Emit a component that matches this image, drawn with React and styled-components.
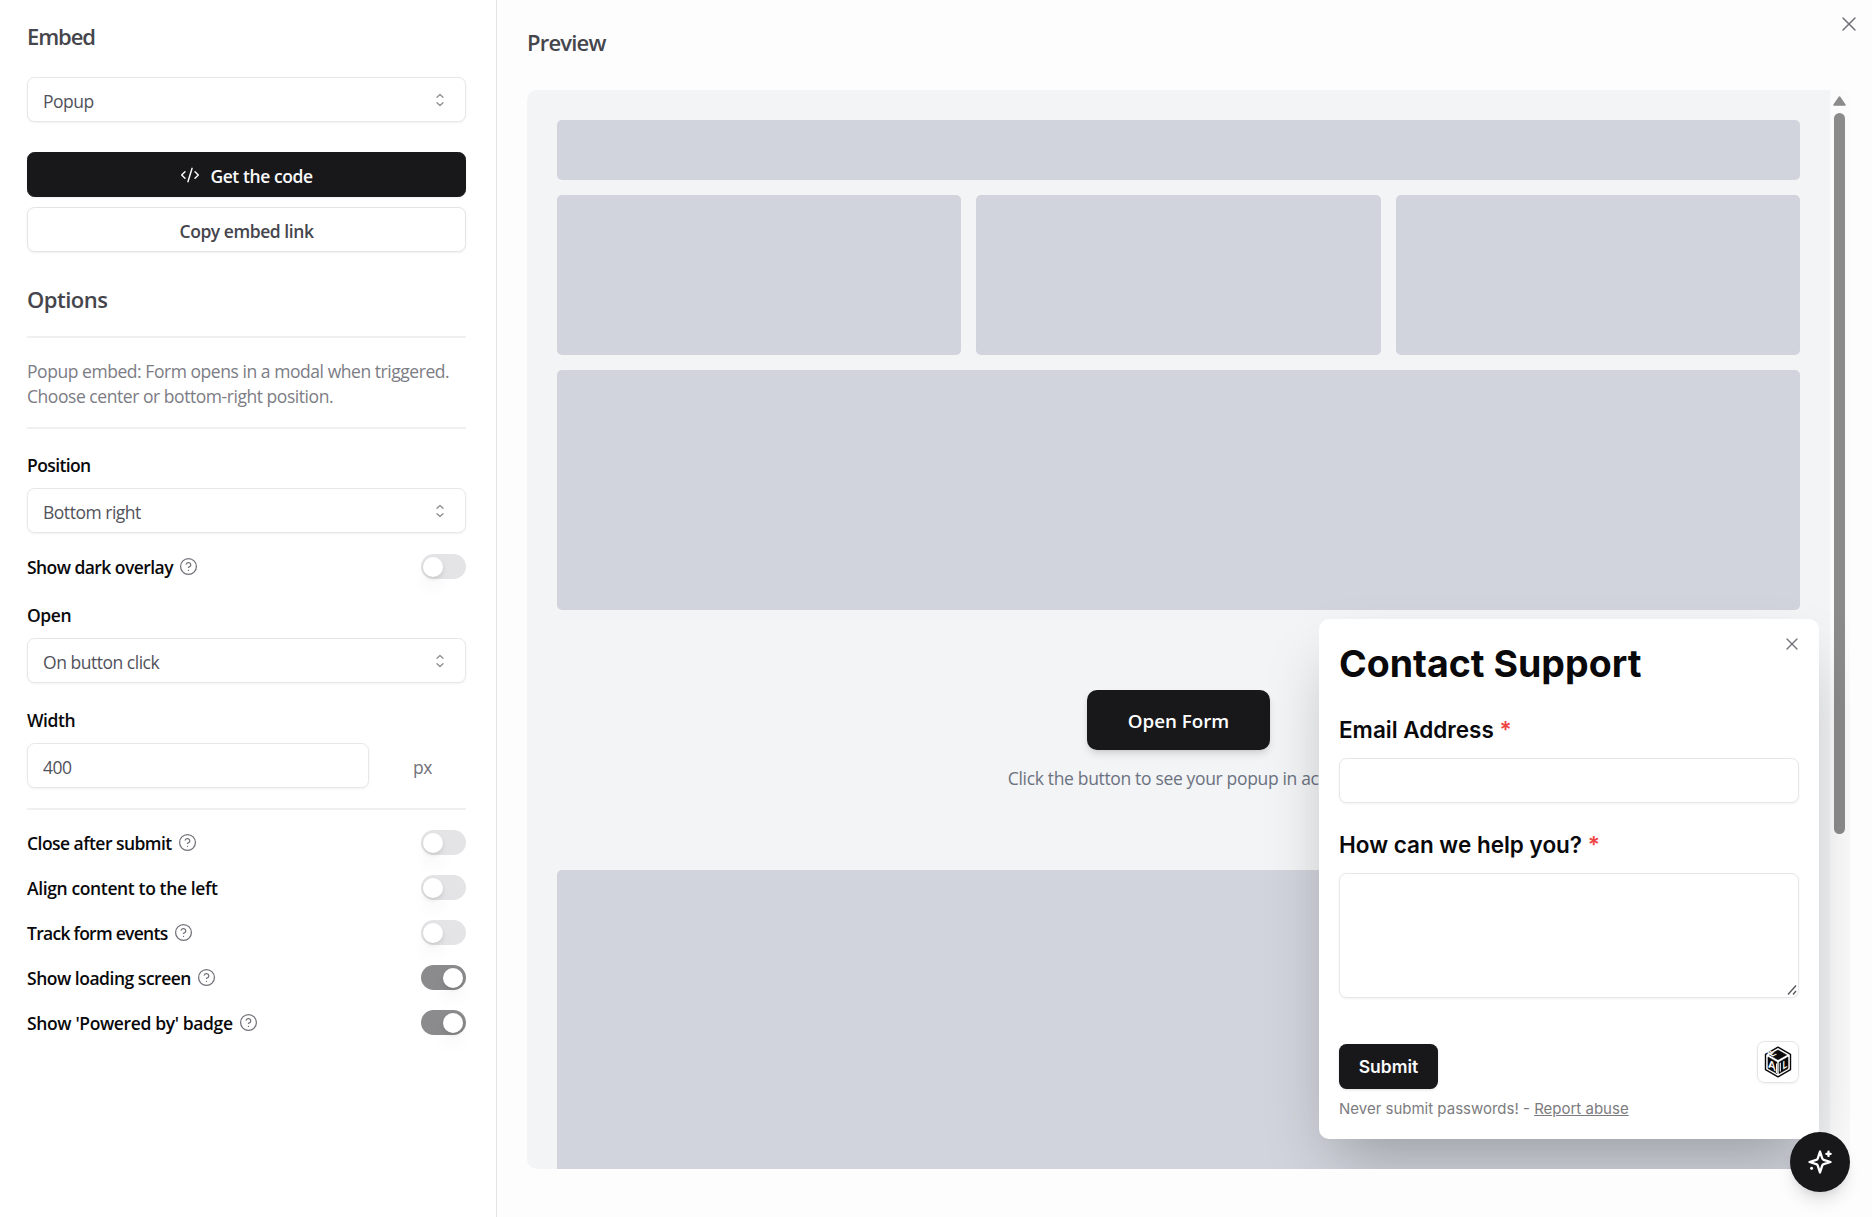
import React from 'react';
import styled, { createGlobalStyle, css } from "styled-components";
import { CodeXml, CircleHelp, X } from "lucide-react";

const GlobalStyle = createGlobalStyle`
    *
    {
        box-sizing: border-box;
    }

    body
    {
        margin: 0;
        background: #fdfdfe;
        color: #09090b;
        font-family: "Open Sans", "Noto Sans", sans-serif;
        font-size: 17.5px;
        overflow: hidden;
    }

    h2, h3, p
    {
        margin: 0;
    }
`;

const field = css`
    height: 45px;
    background: #fff;
    border: 1px solid #e7e7e9;
    border-radius: 7.5px;
    box-shadow: 0 1px 2.5px rgba(0, 0, 0, .06);
`;

const Page = styled.div`
    display: flex;
    height: 1217px;
`;

const Sidebar = styled.aside`
    width: 497px;
    flex: none;
    padding: 21px 30px 0 27px;
    background: #fff;
    border-right: 1px solid #e4e4e7;
`;

const Heading = styled.h2`
    font-size: 22px;
    line-height: 30px;
    font-weight: 600;
    letter-spacing: ${p => p.$track || "-0.8px"};
    color: #45454c;
`;

const Stack = styled.div`
    display: flex;
    flex-direction: column;
    gap: ${p => p.$gap || 0}px;
    padding: ${p => p.$pad || 0};
`;

const SelectBox = styled.div`
    ${field}
    display: flex;
    align-items: center;
    justify-content: space-between;
    padding: 2px 15px 0 15px;
    color: #52525b;
    letter-spacing: -0.48px;

    svg
    {
        margin: -1px 0 0;
    }
`;

const Button = styled.button`
    ${field}
    display: flex;
    align-items: center;
    justify-content: center;
    gap: 10px;
    width: 100%;
    padding: 2px 0 0;
    font: inherit;
    font-weight: 600;
    letter-spacing: ${p => p.$dark ? "-0.42px" : "-0.45px"};
    color: ${p => p.$dark ? "#fafafa" : "#45454c"};
    background: ${p => p.$dark ? "#18181b" : "#fff"};
    border-color: ${p => p.$dark ? "#18181b" : "#e4e4e7"};

    svg
    {
        margin-top: -1px;
    }
`;

const Rule = styled.div`
    height: 2px;
    background: #f0f0f1;
`;

const Description = styled.p`
    height: 89px;
    padding-top: 21px;
    line-height: 25px;
    letter-spacing: -0.45px;
    color: #7c7c85;
    white-space: nowrap;
`;

const Label = styled.span`
    display: flex;
    align-items: center;
    gap: 6px;
    line-height: 24px;
    font-weight: 600;
    letter-spacing: ${p => p.$track || "-0.45px"};
    white-space: nowrap;

    svg
    {
        color: #71717a;
        margin-top: -2px;
    }
`;

const OptionRow = styled.div`
    display: flex;
    align-items: center;
    justify-content: space-between;
    height: 25px;

    ${Label}
    {
        padding-top: 1px;
    }
`;

const Switch = styled.div`
    width: 45px;
    height: 25px;
    padding: 2.5px 3px 2.5px 2px;
    display: flex;
    justify-content: ${p => p.$on ? "flex-end" : "flex-start"};
    border-radius: 13px;
    background: ${p => p.$on ? "#8b8b8d" : "#e4e4e7"};

    &::after
    {
        content: "";
        width: 20px;
        height: 20px;
        border-radius: 50%;
        background: #fff;
        box-shadow: 0 12px 18px -4px rgba(0, 0, 0, .1), 0 2px 4px rgba(0, 0, 0, .1);
    }
`;

const WidthRow = styled.div`
    display: grid;
    grid-template-columns: 342px 1fr;
    align-items: center;
    color: #71717a;

    > span
    {
        padding: 2px 0 0 44px;
        letter-spacing: -0.4px;
    }
`;

const Main = styled.main`
    flex: 1;
    position: relative;
    padding: 27px 22px 48px 30px;
`;

const CloseButton = styled.span`
    position: absolute;
    display: flex;
    top: ${p => p.$top}px;
    right: ${p => p.$right}px;
    color: #71717a;
`;

const Preview = styled.div`
    position: relative;
    display: flex;
    height: 1079px;
    margin-top: 33px;
    border-radius: 10px;
    overflow: hidden;
    background: #f3f4f6;
`;

const Canvas = styled.div`
    flex: 1;
    display: flex;
    flex-direction: column;
    gap: 15px;
    padding: 30px 30px 0;
`;

const Block = styled.div`
    flex: none;
    height: ${p => p.$h}px;
    border-radius: 5px;
    background: #d1d4dc;
`;

const Columns = styled.div`
    flex: none;
    display: grid;
    grid-template-columns: repeat(3, 1fr);
    gap: 15px;
`;

const Trigger = styled.div`
    flex: none;
    height: 230px;
    display: flex;
    flex-direction: column;
    align-items: center;
    padding-top: 65px;
    color: #6b7280;

    p
    {
        margin-top: 15px;
        line-height: 26px;
        letter-spacing: -0.34px;
    }
`;

const OpenButton = styled.button`
    width: 183px;
    height: 60px;
    border: 0;
    border-radius: 10px;
    background: #18181b;
    color: #fff;
    font: inherit;
    font-size: 18.75px;
    font-weight: 600;
    padding-top: 1px;
    box-shadow: 0 5px 8px -1px rgba(0, 0, 0, .12), 0 2px 5px -2px rgba(0, 0, 0, .1);
`;

const ScrollTrack = styled.div`
    width: 20px;
    display: flex;
    flex-direction: column;
    align-items: center;
    padding: 6px 2px 0 0;
    background: #fbfbfc;
`;

const ScrollThumb = styled.div`
    width: 11px;
    height: 721px;
    margin-top: 7px;
    border-radius: 6px;
    background: #8b8b8b;
`;

// The popup floats above the mock page and is clipped by it
const Popup = styled.div`
    position: absolute;
    right: 31px;
    top: 529px;
    width: 500px;
    height: 520px;
    padding: 21px 20px 20px;
    border-radius: 10px;
    background: #fff;
    font-family: Inter, sans-serif;
    box-shadow: 0 31px 62px -15px rgba(0, 0, 0, .27);

    h3
    {
        font-size: 37.5px;
        line-height: 47px;
        font-weight: 700;
    }
`;

const FormLabel = styled.label`
    display: block;
    margin: ${p => p.$top}px 0 13px;
    font-size: 22.5px;
    line-height: 30px;
    font-weight: 600;

    span
    {
        color: #ef4444;
    }
`;

const Input = styled.div`
    ${field}
`;

const Textarea = styled.div`
    ${field}
    position: relative;
    height: 125px;
`;

const Grip = styled.svg`
    position: absolute;
    right: 1px;
    bottom: 2px;
`;

const FormFooter = styled.div`
    display: flex;
    align-items: flex-start;
    justify-content: space-between;
    margin-top: 43px;
`;

const Submit = styled.button`
    width: 99px;
    height: 45px;
    margin-top: 3px;
    border: 0;
    border-radius: 7.5px;
    background: #18181b;
    color: #fafafa;
    font: 600 17.5px Inter, sans-serif;
    box-shadow: 0 1px 3px rgba(0, 0, 0, .12);
`;

const Badge = styled.div`
    width: 42px;
    height: 42px;
    display: flex;
    align-items: center;
    justify-content: center;
    border: 1px solid #e4e4e7;
    border-radius: 7.5px;
    box-shadow: 0 1px 2.5px rgba(0, 0, 0, .06);
`;

const Notice = styled.p`
    margin-top: 9px;
    font-size: 15px;
    line-height: 22px;
    color: #7c7c80;
`;

const Fab = styled.div`
    position: absolute;
    right: 22px;
    top: 1132px;
    width: 60px;
    height: 60px;
    display: flex;
    align-items: center;
    justify-content: center;
    border-radius: 50%;
    background: #18181b;
    color: #fff;
    box-shadow: 0 12px 18px -4px rgba(0, 0, 0, .12), 0 5px 8px -4px rgba(0, 0, 0, .1);
`;

const Chevrons = () => (
    <svg width="20" height="20" viewBox="0 0 16 16" fill="none" stroke="#8b8b90" strokeLinecap="round" strokeLinejoin="round">
        <path d="M5.6 10.2 8 12.4l2.4-2.2M10.4 5.8 8 3.6 5.6 5.8" />
    </svg>
)

const Select = ({ value }) => (
    <SelectBox>{value}<Chevrons /></SelectBox>
)

const Toggle = ({ text, help, on, track }) => (
    <OptionRow>
        <Label $track={track}>
            {text}
            {help && <CircleHelp size={19} strokeWidth={1.6} />}
        </Label>
        <Switch $on={on} />
    </OptionRow>
)

const CubeLogo = () => (
    <svg width="28" height="32" viewBox="0 0 28 32" fill="none" stroke="#09090b" strokeLinejoin="round">
        <path d="M14 1.2 26.5 8.3V23.7L14 30.8 1.5 23.7V8.3Z" strokeWidth="1.4" fill="#fff" />
        <path d="M14 4 22.6 8.9 14 13.8 5.4 8.9ZM4 11 13 16.2V27.6L4 22.5ZM24 11 15 16.2V27.6L24 22.5Z" fill="#09090b" strokeWidth=".6" />
        <g fill="#fff" stroke="none" fontFamily="Inter, sans-serif" fontWeight="600">
            <text transform="matrix(1 .57 0 1 4 20.9)" fontSize="11">A</text>
            <text transform="matrix(.8 -.46 0 1 18.4 23.8)" fontSize="11">L</text>
            <text transform="matrix(.87 -.5 .87 .5 8.2 10.7)" fontSize="9.5">E</text>
        </g>
        <path d="M12.6 17.5v9.5M16.3 16.8v8.6" stroke="#fff" strokeWidth="1.1" />
    </svg>
)

const Sparkles = () => (
    <svg width="28" height="28" viewBox="0 0 24 24" fill="none" stroke="currentColor" strokeWidth="2" strokeLinecap="round" strokeLinejoin="round">
        <path d="m12 3-1.9 5.8a2 2 0 0 1-1.3 1.3L3 12l5.8 1.9a2 2 0 0 1 1.3 1.3L12 21l1.9-5.8a2 2 0 0 1 1.3-1.3L21 12l-5.8-1.9a2 2 0 0 1-1.3-1.3Z" />
        <path d="M19.3 3.2v3.6M17.5 5h3.6M4.8 17v.8M4.4 17.4h.8" />
    </svg>
)

const App = () =>
{
    return (
        <Page>
            <GlobalStyle />
            <Sidebar>
                <Heading $track="-1.1px">Embed</Heading>
                <Stack $pad="26px 0 30px"><Select value="Popup" /></Stack>
                <Stack $gap={10} $pad="0 0 32px">
                    <Button $dark><CodeXml size={20} strokeWidth={1.75} />Get the code</Button>
                    <Button>Copy embed link</Button>
                </Stack>
                <Heading $track="-0.5px">Options</Heading>
                <Stack $pad="22px 0 0"><Rule /></Stack>
                <Description>
                    Popup embed: Form opens in a modal when triggered.<br />
                    Choose center or bottom-right position.
                </Description>
                <Rule />
                <Stack $gap={11} $pad="24px 0 21px">
                    <Label $track="-0.6px">Position</Label>
                    <Select value="Bottom right" />
                </Stack>
                <Toggle text="Show dark overlay" help track="-0.56px" />
                <Stack $gap={11} $pad="24px 0 25px">
                    <Label>Open</Label>
                    <Select value="On button click" />
                </Stack>
                <Stack $gap={11} $pad="0 0 20px">
                    <Label>Width</Label>
                    <WidthRow>
                        <SelectBox>400</SelectBox>
                        <span>px</span>
                    </WidthRow>
                </Stack>
                <Rule />
                <Stack $gap={20} $pad="20px 0 0">
                    <Toggle text="Close after submit" help track="-0.54px" />
                    <Toggle text="Align content to the left" track="-0.37px" />
                    <Toggle text="Track form events" help track="-0.72px" />
                    <Toggle text="Show loading screen" help track="-0.48px" on />
                    <Toggle text="Show 'Powered by' badge" help track="-0.37px" on />
                </Stack>
            </Sidebar>
            <Main>
                <Heading>Preview</Heading>
                <CloseButton $top={12} $right={11}><X size={24} strokeWidth={1.5} /></CloseButton>
                <Preview>
                    <Canvas>
                        <Block $h={60} />
                        <Columns>
                            <Block $h={160} />
                            <Block $h={160} />
                            <Block $h={160} />
                        </Columns>
                        <Block $h={240} />
                        <Trigger>
                            <OpenButton>Open Form</OpenButton>
                            <p>Click the button to see your popup in action</p>
                        </Trigger>
                        <Block $h={320} />
                    </Canvas>
                    <ScrollTrack>
                        <svg width="13" height="10" viewBox="0 0 13 10">
                            <path d="M6.5 1 12 9H1Z" fill="#8b8b8b" stroke="#8b8b8b" strokeWidth="1.5" strokeLinejoin="round" />
                        </svg>
                        <ScrollThumb />
                    </ScrollTrack>
                    <Popup>
                        <CloseButton $top={15} $right={17.5}><X size={20} strokeWidth={1.6} /></CloseButton>
                        <h3>Contact Support</h3>
                        <FormLabel $top={28}>Email Address <span>*</span></FormLabel>
                        <Input />
                        <FormLabel $top={27}>How can we help you? <span>*</span></FormLabel>
                        <Textarea>
                            <Grip width="10" height="10" viewBox="0 0 10 10" stroke="#52525b" strokeWidth="1.3">
                                <path d="M1 9.5 9 .5M6 9.5 9 6" />
                            </Grip>
                        </Textarea>
                        <FormFooter>
                            <Submit>Submit</Submit>
                            <Badge><CubeLogo /></Badge>
                        </FormFooter>
                        <Notice>Never submit passwords! - <u>Report abuse</u></Notice>
                    </Popup>
                </Preview>
                <Fab><Sparkles /></Fab>
            </Main>
        </Page>
    )
}

export default App
